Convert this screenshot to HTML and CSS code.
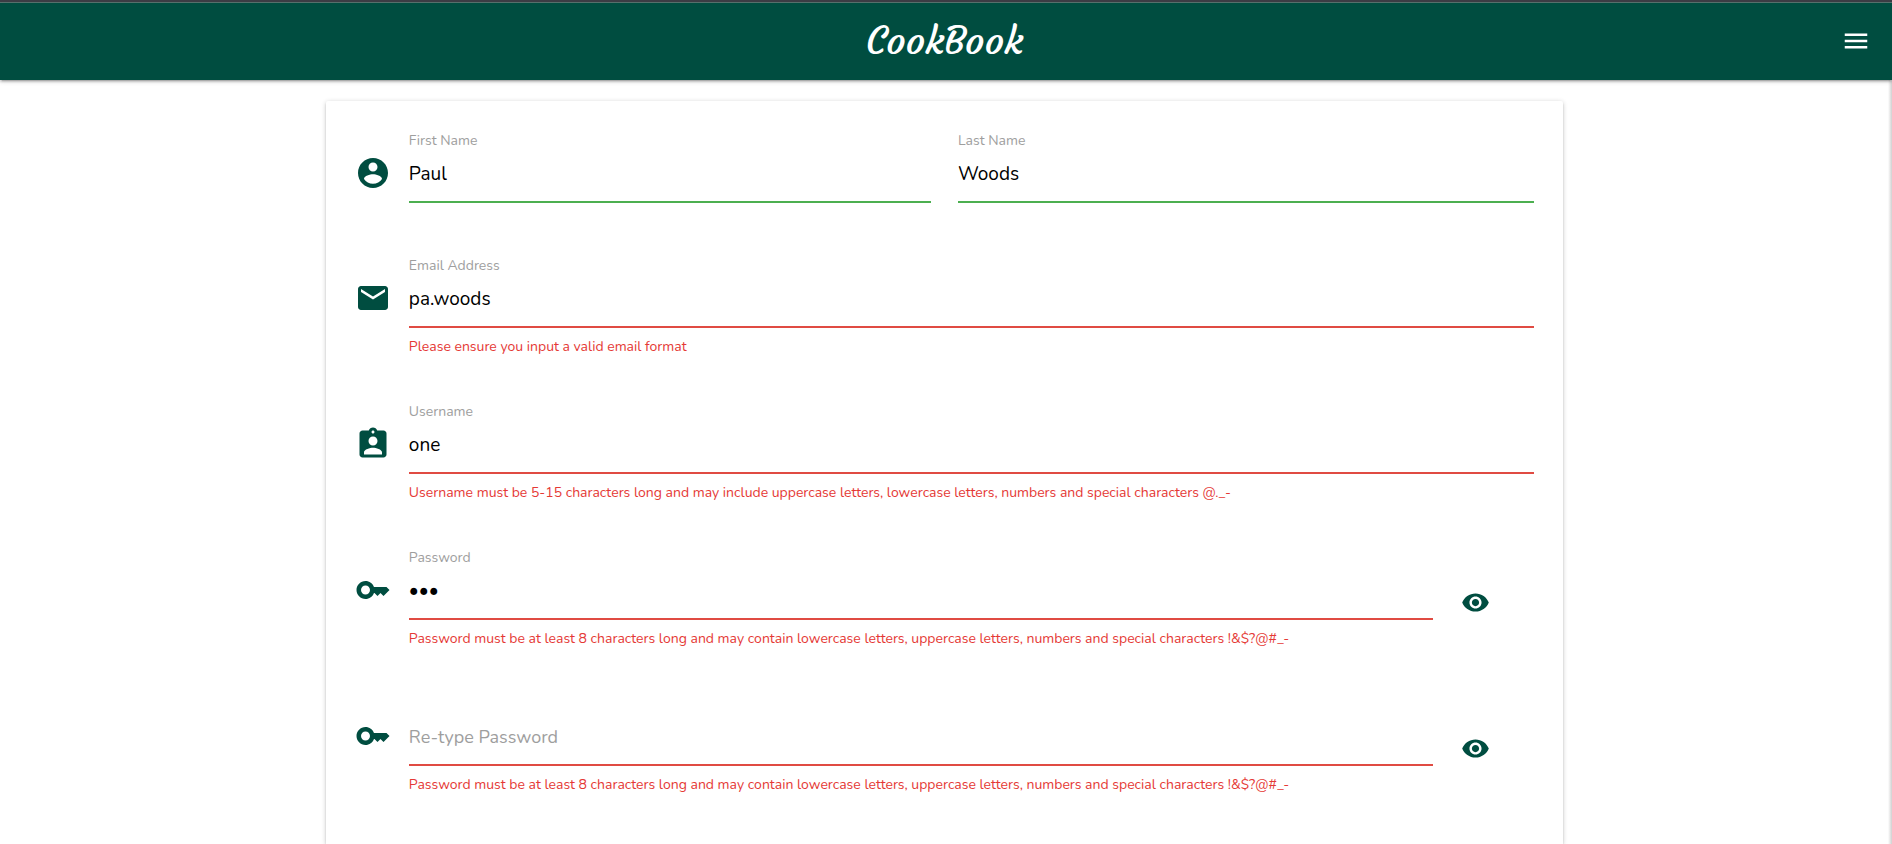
FILE: index.html
```html
<!DOCTYPE html>
<html lang="en">
<head>
<meta charset="utf-8">
<meta name="viewport" content="width=device-width, initial-scale=1">
<title>CookBook</title>
<link rel="stylesheet" href="styles.css">
</head>
<body>
<header class="navbar">
  <a class="logo" href="#">CookBook</a>
  <button class="menu-button" type="button" aria-label="Menu">
    <svg class="icon-menu" viewBox="0 0 24 24"><path d="M3 18h18v-2H3v2zm0-5h18v-2H3v2zm0-7v2h18V6H3z"/></svg>
  </button>
</header>
<main class="page">
  <form class="card" novalidate>
    <div class="row row-names">
      <svg class="prefix" viewBox="0 0 24 24"><path d="M12 2C6.48 2 2 6.48 2 12s4.48 10 10 10 10-4.48 10-10S17.52 2 12 2zm0 3c1.66 0 3 1.34 3 3s-1.34 3-3 3-3-1.34-3-3 1.34-3 3-3zm0 14.200c-2.500 0-4.710-1.280-6-3.220.030-1.990 4-3.080 6-3.080 1.990 0 5.970 1.090 6 3.080-1.290 1.940-3.500 3.220-6 3.220z"/></svg>
      <div class="field valid">
        <label for="first-name">First Name</label>
        <input id="first-name" type="text" value="Paul">
      </div>
      <div class="field valid">
        <label for="last-name">Last Name</label>
        <input id="last-name" type="text" value="Woods">
      </div>
    </div>
    <div class="row">
      <svg class="prefix" viewBox="0 0 24 24"><path d="M20 4H4c-1.100 0-1.990.900-1.990 2L2 18c0 1.100.900 2 2 2h16c1.100 0 2-.900 2-2V6c0-1.100-.900-2-2-2zm0 4l-8 5-8-5V6l8 5 8-5v2z"/></svg>
      <div class="field invalid">
        <label for="email">Email Address</label>
        <input id="email" type="email" value="pa.woods">
        <span class="helper">Please ensure you input a valid email format</span>
      </div>
    </div>
    <div class="row">
      <svg class="prefix" viewBox="0 0 24 24"><path d="M19 3h-4.180C14.400 1.840 13.300 1 12 1c-1.300 0-2.400.840-2.820 2H5c-1.100 0-2 .900-2 2v14c0 1.100.900 2 2 2h14c1.100 0 2-.900 2-2V5c0-1.100-.900-2-2-2zm-7 0c.550 0 1 .450 1 1s-.450 1-1 1-1-.450-1-1 .450-1 1-1zm0 4c1.660 0 3 1.340 3 3s-1.340 3-3 3-3-1.340-3-3 1.340-3 3-3zm6 12H6v-1.400c0-2 4-3.100 6-3.100s6 1.100 6 3.100V19z"/></svg>
      <div class="field invalid">
        <label for="username">Username</label>
        <input id="username" type="text" value="one">
        <span class="helper">Username must be 5-15 characters long and may include uppercase letters, lowercase letters, numbers and special characters @._-</span>
      </div>
    </div>
    <div class="row row-password">
      <svg class="prefix" viewBox="0 0 24 24"><path d="M21 10h-8.350C11.830 7.670 9.610 6 7 6c-3.310 0-6 2.690-6 6s2.690 6 6 6c2.610 0 4.830-1.670 5.650-4H13l2 2 2-2 2 2 4-4.040L21 10zM7 15c-1.650 0-3-1.350-3-3s1.350-3 3-3 3 1.350 3 3-1.350 3-3 3z"/></svg>
      <div class="field invalid">
        <label for="password">Password</label>
        <input id="password" type="password" value="one">
        <span class="helper">Password must be at least 8 characters long and may contain lowercase letters, uppercase letters, numbers and special characters !&amp;$?@#_-</span>
      </div>
      <button class="reveal" type="button" aria-label="Show password">
        <svg class="icon-eye" viewBox="0 0 24 24"><path d="M12 4.500C7 4.500 2.730 7.610 1 12c1.730 4.390 6 7.500 11 7.500s9.270-3.110 11-7.500c-1.730-4.390-6-7.500-11-7.500zM12 17c-2.760 0-5-2.240-5-5s2.240-5 5-5 5 2.240 5 5-2.240 5-5 5zm0-8c-1.660 0-3 1.340-3 3s1.340 3 3 3 3-1.340 3-3-1.340-3-3-3z"/></svg>
      </button>
    </div>
    <div class="row row-password">
      <svg class="prefix" viewBox="0 0 24 24"><path d="M21 10h-8.350C11.830 7.670 9.610 6 7 6c-3.310 0-6 2.690-6 6s2.690 6 6 6c2.610 0 4.830-1.670 5.650-4H13l2 2 2-2 2 2 4-4.040L21 10zM7 15c-1.650 0-3-1.350-3-3s1.350-3 3-3 3 1.350 3 3-1.350 3-3 3z"/></svg>
      <div class="field field-empty invalid">
        <label for="password-again">Re-type Password</label>
        <input id="password-again" type="password">
        <span class="helper">Password must be at least 8 characters long and may contain lowercase letters, uppercase letters, numbers and special characters !&amp;$?@#_-</span>
      </div>
      <button class="reveal" type="button" aria-label="Show re-typed password">
        <svg class="icon-eye" viewBox="0 0 24 24"><path d="M12 4.500C7 4.500 2.730 7.610 1 12c1.730 4.390 6 7.500 11 7.500s9.270-3.110 11-7.500c-1.730-4.390-6-7.500-11-7.500zM12 17c-2.760 0-5-2.240-5-5s2.240-5 5-5 5 2.240 5 5-2.240 5-5 5zm0-8c-1.660 0-3 1.340-3 3s1.340 3 3 3 3-1.340 3-3-1.340-3-3-3z"/></svg>
      </button>
    </div>
  </form>
</main>
</body>
</html>
```
FILE: styles.css
```css
* {
  box-sizing: border-box;
}

body {
  margin: 0;
  min-height: 100vh;
  display: flex;
  flex-direction: column;
  background: #fff;
  color: #000;
  font-family: Nunito, Lato, "Open Sans", sans-serif;
  font-size: 18px;
}

button {
  padding: 0;
  border: 0;
  background: none;
  cursor: pointer;
}

svg {
  display: block;
  fill: currentColor;
}

.navbar {
  position: relative;
  display: grid;
  grid-template-columns: 1fr auto 1fr;
  align-items: center;
  height: 80px;
  padding: 0 21px 0 18px;
  border-top: 2px solid #3c3c44;
  background: #004d40;
  color: #fff;
  box-shadow: inset 0 1px 0 #56706c, 0 2px 2px rgba(0, 0, 0, 0.14), 0 3px 1px -2px rgba(0, 0, 0, 0.12), 0 1px 5px rgba(0, 0, 0, 0.2);
}

.logo {
  grid-column: 2;
  color: #fff;
  font-family: Courgette, Lato, sans-serif;
  font-size: 38px;
  line-height: 76px;
  text-decoration: none;
}

.menu-button {
  justify-self: end;
  color: #fff;
}

.icon-menu {
  width: 30px;
  height: 30px;
}

.page {
  display: flex;
  flex: 1;
  justify-content: center;
  padding: 21px 3px 0 0;
  background: linear-gradient(to left, #d0d0d0, #fff 4px);
}

.card {
  display: flex;
  flex-direction: column;
  gap: 44px;
  width: 65.5%;
  padding: 29px 29px 0;
  border-radius: 2px 2px 0 0;
  background: #fff;
  box-shadow: 0 2px 2px rgba(0, 0, 0, 0.14), 0 3px 1px -2px rgba(0, 0, 0, 0.12), 0 1px 5px rgba(0, 0, 0, 0.2);
}

.row {
  display: grid;
  grid-template-columns: 36px minmax(0, 1fr);
  column-gap: 18px;
  align-items: start;
}

.row-names {
  grid-template-columns: 36px minmax(0, 58fr) minmax(0, 65fr);
  padding-bottom: 8px;
}

.row-names .field + .field {
  margin-left: 9px;
}

.row-password {
  grid-template-columns: 36px minmax(0, 1fr) 83px;
}

.prefix {
  width: 36px;
  height: 36px;
  margin-top: 25px;
  color: #004d40;
}

.field {
  display: grid;
  grid-template-rows: 20px 53px auto;
}

.field label {
  color: #9e9e9e;
  font-size: 14px;
  line-height: 22px;
}

.field input {
  width: 100%;
  min-width: 0;
  padding: 0 0 4px;
  border: 0;
  border-bottom: 2px solid #9e9e9e;
  outline: 0;
  background: transparent;
  color: #000;
  font-family: inherit;
  font-size: 19px;
}

.valid input {
  border-bottom-color: #4caf50;
}

.invalid input {
  border-bottom-color: #e04b43;
}

.helper {
  grid-row: 3;
  margin-top: 9px;
  color: #e53935;
  font-size: 14px;
  line-height: 20px;
}

.field-empty label,
.field-empty input {
  grid-area: 2 / 1;
}

.field-empty label {
  font-size: 18px;
  line-height: 48px;
}

.reveal {
  justify-self: start;
  margin: 41px 0 0 10px;
  color: #004d40;
}

.icon-eye {
  width: 29px;
  height: 29px;
}
```
